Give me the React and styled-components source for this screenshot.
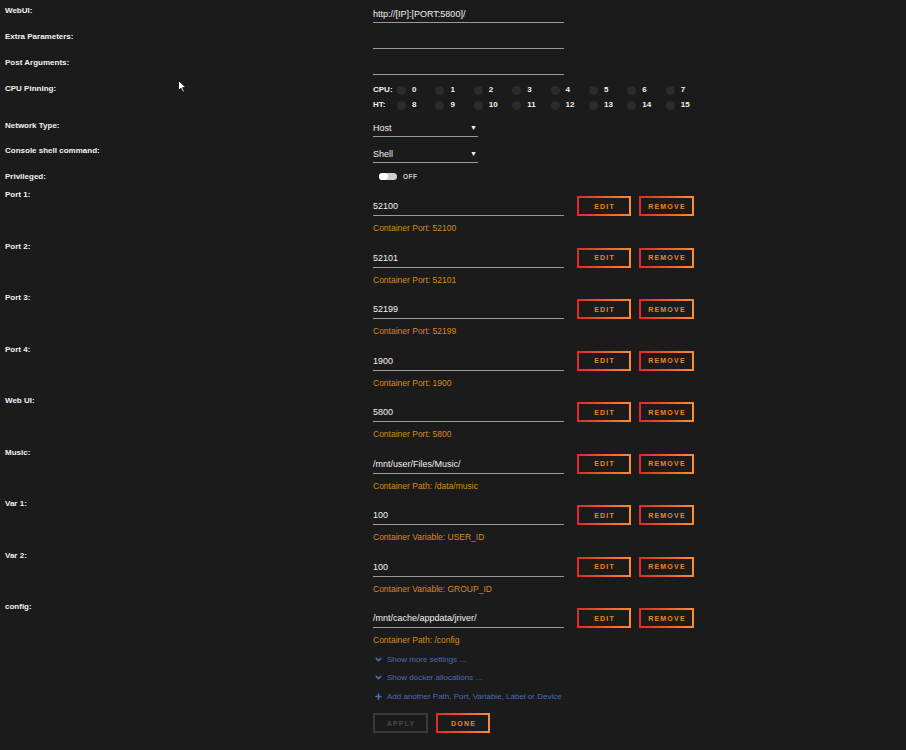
import React from 'react';
import styled, { createGlobalStyle } from 'styled-components';
import { ChevronDown, Plus } from 'lucide-react';

const GlobalStyle = createGlobalStyle`
  html, body {
    margin: 0;
    padding: 0;
    background: #1c1b1b;
  }
  body {
    font-family: 'Liberation Sans', Arial, sans-serif;
    color: #f2f2f2;
  }
`;

const colors = {
  bg: '#1c1b1b',
  text: '#f2f2f2',
  line: '#9a9a9a',
  hint: '#d98a14',
  link: '#486dba',
  red: '#e22828',
  orange: '#ff8c2f',
};

const Page = styled.div`
  position: relative;
  width: 906px;
  height: 750px;
  overflow: hidden;
`;

const Row = styled.div`
  display: grid;
  grid-template-columns: 373px 1fr;
  height: ${props => props.h}px;
`;

const Label = styled.div`
  padding: 6px 0 0 5px;
  font-size: 8px;
  line-height: 10px;
  font-weight: 700;
  color: ${colors.text};
`;

const Field = styled.div`
  box-sizing: border-box;
  width: ${props => props.w || 191}px;
  margin-top: ${props => props.top || 0}px;
  height: ${props => props.h || 19}px;
  padding-top: ${props => props.pad || 0}px;
  border-bottom: 1px solid ${colors.line};
  font-size: 9px;
  line-height: 16px;
  color: ${colors.text};
  display: flex;
  justify-content: space-between;
  white-space: nowrap;
`;

const Arrow = styled.span`
  font-size: 7px;
  padding-right: 1px;
`;

const PinGrid = styled.div`
  padding-top: 7px;
  display: grid;
  grid-template-columns: 24px repeat(8, 38.4px);
  grid-auto-rows: 10px;
  row-gap: 5px;
  font-size: 8px;
  line-height: 10px;
  font-weight: 700;
`;

const Pin = styled.div`
  display: flex;
  align-items: center;
  gap: 6px;
`;

const Dot = styled.span`
  width: 9px;
  height: 9px;
  border-radius: 50%;
  background: #2c2c2c;
`;

const ToggleWrap = styled.div`
  display: flex;
  align-items: center;
  gap: 6px;
  padding: 3px 0 0 6px;
`;

const Track = styled.span`
  position: relative;
  width: 18px;
  height: 7px;
  border-radius: 4px;
  background: #cfcfcf;
  &::after {
    content: '';
    position: absolute;
    left: 0;
    top: 0;
    width: 9px;
    height: 7px;
    border-radius: 4px;
    background: #ffffff;
  }
`;

const ToggleText = styled.span`
  font-size: 6.5px;
  font-weight: 700;
  letter-spacing: 0.5px;
  color: #cccccc;
`;

const Entry = styled.div`
  display: flex;
  flex-direction: column;
`;

const EntryLine = styled.div`
  display: flex;
  align-items: flex-start;
  padding-top: 12px;
`;

const Buttons = styled.div`
  display: flex;
  gap: 8px;
  margin-left: 13px;
`;

const Button = styled.div`
  box-sizing: border-box;
  width: ${props => props.w || 54}px;
  height: 20px;
  display: flex;
  align-items: center;
  justify-content: center;
  border: 2px solid transparent;
  background: ${props =>
    props.disabled
      ? `linear-gradient(${colors.bg}, ${colors.bg}) padding-box, linear-gradient(#3a3a3a, #3a3a3a) border-box`
      : `linear-gradient(${colors.bg}, ${colors.bg}) padding-box, linear-gradient(90deg, ${colors.red}, ${colors.orange}) border-box`};
  color: ${props => (props.disabled ? '#4a4a4a' : '#e8862a')};
  font-size: 7px;
  font-weight: 700;
  letter-spacing: 1.2px;
  padding-left: 1px;
`;

const Hint = styled.div`
  margin-top: 6px;
  font-size: 8.5px;
  line-height: 12px;
  color: ${colors.hint};
  white-space: nowrap;
`;

const Footer = styled.div`
  margin-left: 373px;
  padding-top: 2px;
`;

const LinkLine = styled.div`
  display: flex;
  align-items: center;
  gap: 4px;
  height: 18.5px;
  font-size: 8px;
  color: ${colors.link};
  svg {
    margin-left: 1px;
  }
`;

const FooterButtons = styled.div`
  display: flex;
  gap: 8px;
  margin-top: 8px;
`;

const Cursor = styled.svg`
  position: absolute;
  left: 178px;
  top: 80px;
`;

const textRows = [
  { label: 'WebUI:', value: 'http://[IP]:[PORT:5800]/' },
  { label: 'Extra Parameters:', value: '' },
  { label: 'Post Arguments:', value: '' },
];

const entries = [
  { label: 'Port 1:', value: '52100', hint: 'Container Port: 52100' },
  { label: 'Port 2:', value: '52101', hint: 'Container Port: 52101' },
  { label: 'Port 3:', value: '52199', hint: 'Container Port: 52199' },
  { label: 'Port 4:', value: '1900', hint: 'Container Port: 1900' },
  { label: 'Web UI:', value: '5800', hint: 'Container Port: 5800' },
  { label: 'Music:', value: '/mnt/user/Files/Music/', hint: 'Container Path: /data/music' },
  { label: 'Var 1:', value: '100', hint: 'Container Variable: USER_ID' },
  { label: 'Var 2:', value: '100', hint: 'Container Variable: GROUP_ID' },
  { label: 'config:', value: '/mnt/cache/appdata/jriver/', hint: 'Container Path: /config' },
];

const CpuPins = () => (
  <PinGrid>
    <span>CPU:</span>
    {[0, 1, 2, 3, 4, 5, 6, 7].map(n => (
      <Pin key={n}>
        <Dot />
        {n}
      </Pin>
    ))}
    <span>HT:</span>
    {[8, 9, 10, 11, 12, 13, 14, 15].map(n => (
      <Pin key={n}>
        <Dot />
        {n}
      </Pin>
    ))}
  </PinGrid>
);

const App = () => (
  <Page>
    <GlobalStyle />
    {textRows.map(row => (
      <Row h={26} key={row.label}>
        <Label>{row.label}</Label>
        <div>
          <Field top={4} pad={2}>{row.value}</Field>
        </div>
      </Row>
    ))}
    <Row h={37.3}>
      <Label>CPU Pinning:</Label>
      <CpuPins />
    </Row>
    <Row h={25}>
      <Label>Network Type:</Label>
      <div>
        <Field w={105} top={5} h={17}>
          Host <Arrow>▼</Arrow>
        </Field>
      </div>
    </Row>
    <Row h={25.7}>
      <Label>Console shell command:</Label>
      <div>
        <Field w={105} top={6} h={17}>
          Shell <Arrow>▼</Arrow>
        </Field>
      </div>
    </Row>
    <Row h={18.3}>
      <Label>Privileged:</Label>
      <ToggleWrap>
        <Track />
        <ToggleText>OFF</ToggleText>
      </ToggleWrap>
    </Row>
    {entries.map(entry => (
      <Row h={51.5} key={entry.label}>
        <Label>{entry.label}</Label>
        <Entry>
          <EntryLine>
            <Field h={20} pad={2}>{entry.value}</Field>
            <Buttons>
              <Button>EDIT</Button>
              <Button w={55}>REMOVE</Button>
            </Buttons>
          </EntryLine>
          <Hint>{entry.hint}</Hint>
        </Entry>
      </Row>
    ))}
    <Footer>
      <LinkLine>
        <ChevronDown size={9} strokeWidth={4} />
        Show more settings ...
      </LinkLine>
      <LinkLine>
        <ChevronDown size={9} strokeWidth={4} />
        Show docker allocations ...
      </LinkLine>
      <LinkLine>
        <Plus size={9} strokeWidth={4} />
        Add another Path, Port, Variable, Label or Device
      </LinkLine>
      <FooterButtons>
        <Button disabled w={55}>APPLY</Button>
        <Button>DONE</Button>
      </FooterButtons>
    </Footer>
    <Cursor width="9" height="13" viewBox="0 0 9 13">
      <path d="M0.5 0.5 L0.5 10.5 L3 8.2 L4.8 12.2 L6.3 11.5 L4.6 7.6 L8 7.6 Z" fill="#ffffff" stroke="#000000" strokeWidth="0.8" />
    </Cursor>
  </Page>
);

export default App;
